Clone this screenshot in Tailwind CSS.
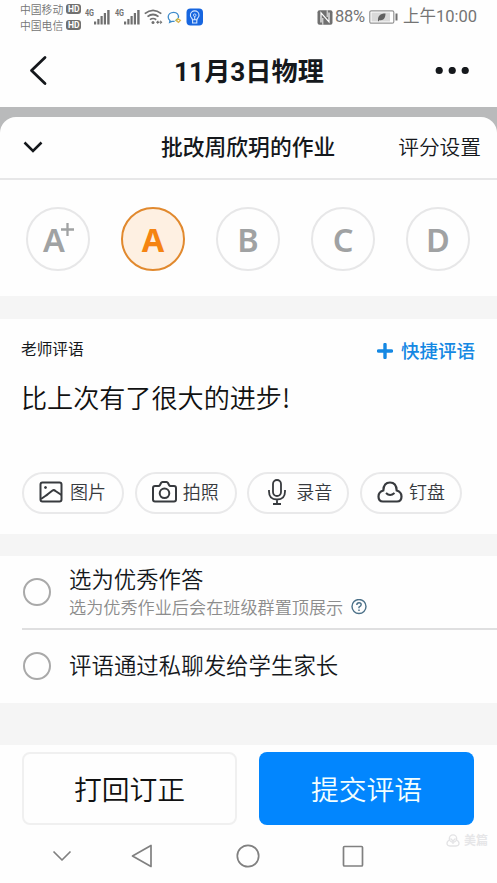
<!DOCTYPE html>
<html lang="zh-CN">
<head>
<meta charset="utf-8">
<title>11月3日物理</title>
<script src="https://cdn.jsdelivr.net/npm/@tailwindcss/browser@4"></script>
</head>
<body class="w-[497px] h-[883px] overflow-hidden bg-[#fefefe] text-[#15181c] font-['Noto_Sans_CJK_SC',sans-serif] font-[350] flex flex-col whitespace-nowrap">

<!-- status bar -->
<div class="h-[34px] shrink-0 flex items-center pl-[20px] pr-[19px] text-[#747474]">
  <div class="flex flex-col text-[10.8px] leading-[16px] w-[62px] pb-[1px]">
    <div class="flex items-center gap-[3px]"><span>中国移动</span><span class="bg-[#707070] text-white rounded-[3px] h-[10px] w-[15px] text-center font-bold text-[8.5px] leading-[10px] font-[Roboto,sans-serif]">HD</span></div>
    <div class="flex items-center gap-[3px]"><span>中国电信</span><span class="bg-[#707070] text-white rounded-[3px] h-[10px] w-[15px] text-center font-bold text-[8.5px] leading-[10px] font-[Roboto,sans-serif]">HD</span></div>
  </div>
  <svg class="ml-[2px] shrink-0" width="122" height="22" viewBox="84 5.500 122 22" fill="none">
    <g fill="#707070">
      <text x="85" y="15.500" font-size="9" font-weight="700" font-family="Roboto, sans-serif" textLength="9" lengthAdjust="spacingAndGlyphs">4G</text>
      <path d="M94 21h2.200v3H94zM97.300 18.500h2.200V24h-2.200zM100.500 15.500h2.200V24h-2.200zM103.800 12.500h2.200V24h-2.200zM107.200 9.500h2.400V24h-2.400z"/>
      <text x="115" y="15.500" font-size="9" font-weight="700" font-family="Roboto, sans-serif" textLength="9" lengthAdjust="spacingAndGlyphs">4G</text>
      <path d="M124 21h2.200v3H124zM127.300 18.500h2.200V24h-2.200zM130.500 15.500h2.200V24h-2.200zM133.800 12.500h2.200V24h-2.200zM137.200 9.500h2.400V24h-2.400z"/>
      <circle cx="153" cy="22" r="1.500"/>
      <path d="M156 21.700l2.200-2v1.300h1.300v1.500h-1.300v1.200zM162.400 21.700l-2.200-2v4z"/>
    </g>
    <path d="M144.800 13.200q8.200-6.800 16.500 0M147.500 16.200q5.500-4.400 11 0M150 19.200q3-2.400 6.200 0" stroke="#707070" stroke-width="1.700"/>
    <path d="M178.300 17.500c.8-3.500-1.500-5.700-4.600-5.700-3.400 0-5.500 2.100-5.500 4.700 0 1.700.8 2.900 1.800 3.600l-.4 1.800 2.300-1h2.700" stroke="#3f8ccb" stroke-width="1.300"/>
    <path d="M175.500 20.300l2.500-2.300" stroke="#72b765" stroke-width="1.500"/>
    <path d="M178 18.300l2.400 1.600-1.900 2-2-1.600z" stroke="#dbb34b" stroke-width="1.200"/>
    <rect x="186.500" y="8" width="16.500" height="17" rx="4" fill="#1766e0"/>
    <path d="M192.400 19.200q0-1.200-1-2-1-1-1-2.500a4.300 4.300 0 0 1 8.600 0q0 1.500-1 2.500-1 .8-1 2zM192.600 19.500v3h4.200v-3M194.700 16v3.500" stroke="#d4e5ff" stroke-width="1.100"/><circle cx="194.700" cy="14.700" r="1.300" stroke="#d4e5ff" stroke-width=".9"/>
  </svg>
  <div class="ml-auto flex items-center text-[16.500px] font-[Roboto,'Noto_Sans_CJK_SC',sans-serif] font-normal">
    <svg width="16" height="15" viewBox="0 0 16 15"><rect x=".5" y=".3" width="15" height="14.400" rx="2" fill="#707070"/><path d="M4 12.500V2.800l8 9V2.500" fill="none" stroke="#fff" stroke-width="1.200"/><path d="M5.800 8v6.700M10.200 .3V7" stroke="#fff" stroke-width=".9"/></svg>
    <span class="ml-[2px] w-[31px] tracking-[-0.3px]">88%</span>
    <svg class="ml-[3px]" width="29" height="14" viewBox="0 0 29 14"><rect x=".8" y=".8" width="24" height="12.400" rx="1.500" fill="#fff" stroke="#959595" stroke-width="1.200"/><path d="M2.500 2.500h18.500v9H2.500z" fill="#d9d9d9"/><path d="M9 11c-.5-5 2-7.500 7.500-7.500C16.500 8.500 14 11 10.500 10l-1 1.500z" fill="#606060"/><path d="M26.500 3.500h2v7h-2z" fill="#707070"/></svg>
    <span class="ml-[5px] w-[75px] pt-[1px]">上午10:00</span>
  </div>
</div>

<!-- title bar -->
<header class="h-[73px] shrink-0 flex items-center justify-between pl-[28px] pr-[27px]">
  <svg width="36" height="32" viewBox="0 0 36 32" fill="none"><path d="M17 2.500L3.500 15.500 17 28.500" stroke="#15181c" stroke-width="2.800" stroke-linecap="round" stroke-linejoin="round"/></svg>
  <h1 class="text-[26.200px] leading-[30px] font-bold font-[Roboto,'Noto_Sans_CJK_SC',sans-serif] pt-[3px]">11月3日物理</h1>
  <svg width="36" height="8" viewBox="0 0 36 8" fill="#15181c"><circle cx="5.200" cy="3.500" r="3.600"/><circle cx="18.200" cy="3.500" r="3.600"/><circle cx="31.200" cy="3.500" r="3.600"/></svg>
</header>

<div class="bg-[#b9babb] pt-[10px] shrink-0">
  <div class="h-[63px] bg-[#fefefe] rounded-t-[16px] border-b-2 border-[#e7e7e8] flex items-center justify-between pl-[22px] pr-[16px]">
    <svg class="w-[84px]" height="14" viewBox="0 0 84 14" fill="none"><path d="M2.500 1.500l8.500 8.500 8.500-8.500" stroke="#15181c" stroke-width="2.500"/></svg>
    <h2 class="text-[21.800px] leading-[30px] font-medium mr-[5px] ml-[-3px] pb-[3px]">批改周欣玥的作业</h2>
    <span class="text-[20.700px] leading-[30px] pb-[3px]">评分设置</span>
  </div>
</div>

<!-- grades -->
<div class="h-[116px] shrink-0 flex justify-between pl-[26px] pr-[27px] pt-[27px] text-[32.500px] font-semibold text-[#a0a2a3] font-['Noto_Sans','Open_Sans',sans-serif]">
  <div class="size-[64px] rounded-full border-2 border-[#e7e7e8] flex items-center justify-center relative"><span class="mr-[8px] pt-[2px]">A</span>
    <svg class="absolute left-[33px] top-[14px]" width="13" height="13" viewBox="0 0 13 13"><path d="M6.500 0v13M0 6.500h13" stroke="#a0a2a3" stroke-width="2.300"/></svg></div>
  <div class="size-[64px] rounded-full border-2 border-[#e1892e] bg-[#fef0e2] text-[#f58412] flex items-center justify-center pt-[2px] font-bold">A</div>
  <div class="size-[64px] rounded-full border-2 border-[#e7e7e8] flex items-center justify-center pt-[2px]">B</div>
  <div class="size-[64px] rounded-full border-2 border-[#e7e7e8] flex items-center justify-center pt-[2px]">C</div>
  <div class="size-[64px] rounded-full border-2 border-[#e7e7e8] flex items-center justify-center pt-[2px]">D</div>
</div>
<div class="h-[23px] shrink-0 bg-[#f5f5f5]"></div>

<!-- comment -->
<section class="h-[215px] shrink-0 px-[22px] flex flex-col">
  <div class="flex items-center justify-between pt-[17px] h-[47px]">
    <span class="text-[15.700px] leading-[24px] pb-[5px] ml-[-1px] font-normal">老师评语</span>
    <div class="flex items-center gap-[8px] text-[#1588e3] text-[18.500px] leading-[28px]">
      <svg width="16" height="16" viewBox="0 0 16 16"><path d="M8 1.500v13M1.500 8h13" stroke="#1588e3" stroke-width="3.400" stroke-linecap="round"/></svg><span class="pb-[2px] font-medium">快捷评语</span></div>
  </div>
  <p class="text-[26.100px] leading-[38px] mt-[12px] ml-[-1px] text-[#111]">比上次有了很大的进步!</p>
  <div class="mt-auto mb-[20px] flex justify-between w-[440px] text-[18px] text-[#373a3e]">
    <div class="w-[102px] h-[42px] rounded-full border-2 border-[#e9e9ea] flex items-center pl-[15px] gap-[7px]">
      <svg class="mb-[2px]" width="24" height="22" viewBox="0 0 24 22" fill="none" stroke="#373a3e" stroke-width="2"><rect x="1.500" y="1.500" width="21" height="19" rx="2"/><path d="M2 18l5-3.500q1-.5 2-1.500l4.500-3.500q1.500-1 3 .5L22.500 14"/><circle cx="6.500" cy="6.500" r="1" fill="#373a3e" stroke-width="1"/></svg><span class="pb-[3px]">图片</span></div>
    <div class="w-[102px] h-[42px] rounded-full border-2 border-[#e9e9ea] flex items-center pl-[15px] gap-[6px]">
      <svg class="mb-[2px]" width="25" height="22" viewBox="0 0 25 22" fill="none" stroke="#373a3e" stroke-width="2"><path d="M3 5h3.500q1 0 1.500-1l1-2q.5-1 1.500-1h4q1 0 1.500 1l1 2q.5 1 1.500 1H22q2 0 2 2v11.500q0 2-2 2H3q-2 0-2-2V7q0-2 2-2z"/><circle cx="12.500" cy="12.300" r="4.800"/></svg><span class="pb-[3px]">拍照</span></div>
    <div class="w-[102px] h-[42px] rounded-full border-2 border-[#e9e9ea] flex items-center pl-[19px] gap-[10px]">
      <svg class="mb-[2px]" width="18" height="26" viewBox="0 0 18 26" fill="none" stroke="#373a3e" stroke-width="1.800"><rect x="5" y="1" width="8" height="16" rx="4"/><path d="M1 11v1.500q0 8 8 8t8-8V11M9 20.500V25M5 25h8"/></svg><span class="pb-[3px]">录音</span></div>
    <div class="w-[102px] h-[42px] rounded-full border-2 border-[#e9e9ea] flex items-center pl-[15px] gap-[6px]">
      <svg class="mb-[2px]" width="26" height="22" viewBox="0 0 26 22" fill="none" stroke="#373a3e" stroke-width="2.200"><path d="M6 20.500Q1.500 20.500 1.500 15.500 1.500 11 6.300 9.500C6.500 4.500 9 1.500 13 1.500s6.500 3 6.700 8q4.800 1.500 4.800 6 0 5-4.500 5z"/><path d="M9 12q4 4 8.500 0" stroke-width="2"/></svg><span class="pb-[3px]">钉盘</span></div>
  </div>
</section>
<div class="h-[22px] shrink-0 bg-[#f5f5f5]"></div>

<!-- options -->
<section class="h-[147px] shrink-0 pl-[22px]">
  <div class="h-[74px] border-b-2 border-[#dfdfe0] flex items-center">
    <div class="size-[28px] rounded-full border-2 border-[#a9a9a9] ml-[1px] mb-[1px]"></div>
    <div class="ml-[18px] pb-[3px]">
      <div class="text-[22.400px] leading-[30px] pb-[2px]">选为优秀作答</div>
      <div class="text-[17.150px] leading-[24px] text-[#8c8c8c] flex items-center">选为优秀作业后会在班级群置顶展示
        <svg class="ml-[8px]" width="16" height="16" viewBox="0 0 16 16" fill="none" stroke="#4b7088" stroke-width="1.400"><circle cx="8" cy="7.500" r="7"/><path d="M5.800 6Q5.800 3.800 8 3.800t2.200 2Q10.200 7 8 8.100v1.200M8 10.500V12"/></svg></div>
    </div>
  </div>
  <div class="h-[73px] flex items-center">
    <div class="size-[28px] rounded-full border-2 border-[#a9a9a9] ml-[1px] mb-[1px]"></div>
    <div class="ml-[18px] text-[22.450px] leading-[32px] pb-[5px]">评语通过私聊发给学生家长</div>
  </div>
</section>
<div class="h-[42px] shrink-0 bg-[#f5f5f5]"></div>

<!-- actions -->
<div class="shrink-0 h-[80px] pt-[7px] pl-[22px] pr-[23px] flex justify-between text-[27.800px]">
  <button class="w-[215px] h-[73px] rounded-[8px] border-2 border-[#f0f0f0] text-[#111]">打回订正</button>
  <button class="w-[215px] h-[73px] rounded-[8px] bg-[#0286fe] text-[#f4fffe]">提交评语</button>
</div>

<!-- system navigation -->
<nav class="relative h-[58px] shrink-0 pt-[4px]">
  <svg width="497" height="54" viewBox="0 829 497 54" fill="none" stroke="#808080" stroke-width="1.700" stroke-linejoin="round"><path d="M53.500 851.500l8.500 8.500 8.500-8.500"/><path d="M151 845.500v21L132.500 856z"/><circle cx="248" cy="856" r="10.700"/><rect x="343.500" y="846.500" width="19" height="19.500" rx="1"/></svg>
  <div class="absolute left-[446px] top-[5px] flex items-center gap-[4px] text-[#e6e6e8] text-[12px] leading-[20px] font-bold">
    <svg width="14" height="13" viewBox="0 0 14 13" fill="none" stroke="#e3e3e5" stroke-width="1.300"><circle cx="7" cy="4.500" r="3.700"/><path d="M3.300 6Q.7 7.500 1 10q.5 2 3 2h6q2.500 0 3-2 .3-2.500-2.300-4M4.500 4.500L7 7l2.500-2.500M7 7v3"/></svg><span>美篇</span></div>
</nav>
</body>
</html>
